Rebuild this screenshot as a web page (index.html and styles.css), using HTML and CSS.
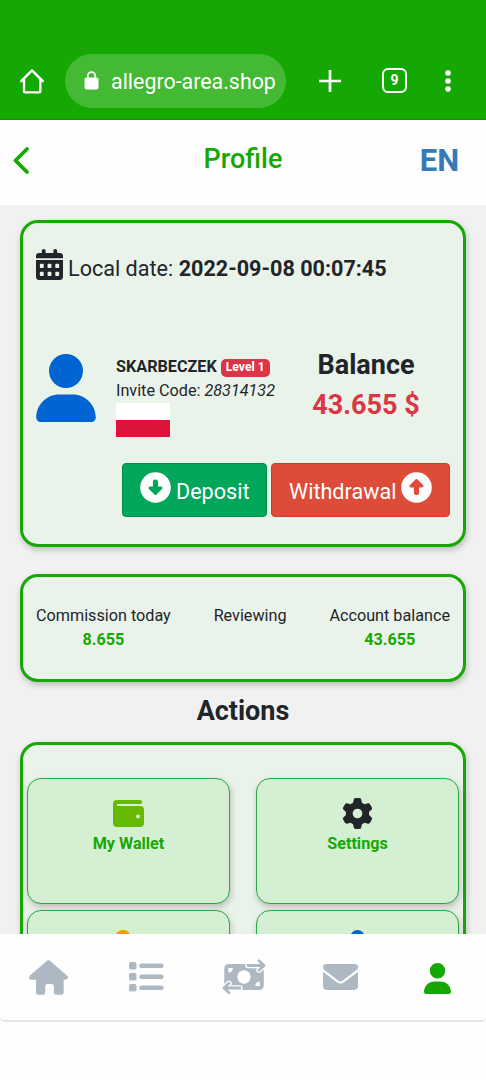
FILE: index.html
```html
<!DOCTYPE html>
<html lang="en">
<head>
<meta charset="utf-8">
<title>Profile</title>
<link rel="stylesheet" href="styles.css">
</head>
<body>
<div class="screen">
  <div class="browser">
    <svg class="home" width="26" height="26" viewBox="0 0 26 26" fill="none" stroke="#fff" stroke-width="2.4" stroke-linejoin="round" stroke-linecap="round"><path d="M2.2 13.2 13 2.4l10.800 10.800M5 11.500V23.500q0 .9.9.9H20.400q.9 0 .9-.9V11.500"/></svg>
    <div class="address">
      <svg width="15" height="19" viewBox="0 0 15 19"><rect x=".5" y="6.500" width="14" height="12" rx="2" fill="#fff"/><path d="M3.800 8V4.800a3.700 3.700 0 0 1 7.400 0V8" fill="none" stroke="#fff" stroke-width="1.700"/></svg>
      <span class="url">allegro-area.shop</span>
    </div>
    <svg class="plus" width="22" height="22" viewBox="0 0 22 22" stroke="#fff" stroke-width="2.700"><path d="M11 0v22M0 11h22"/></svg>
    <span class="tabs">9</span>
    <svg class="dots" width="6" height="22" viewBox="0 0 6 22" fill="#fff"><circle cx="3" cy="3" r="2.800"/><circle cx="3" cy="11" r="2.800"/><circle cx="3" cy="19" r="2.800"/></svg>
  </div>
  <header class="header">
    <svg class="back" width="18" height="28" viewBox="0 0 18 28" fill="none" stroke="#16a802" stroke-width="3.800" stroke-linecap="round" stroke-linejoin="round"><path d="M15 3 3.500 14.500 15 26"/></svg>
    <h1 class="title">Profile</h1>
    <span class="lang">EN</span>
  </header>
  <main class="content">
    <section class="card profile">
      <div class="date-row">
        <svg class="calendar" width="27" height="31" viewBox="0 0 448 512" preserveAspectRatio="none" fill="#212529"><path fill-rule="evenodd" d="M128 0c17.700 0 32 14.300 32 32v32h128V32c0-17.700 14.300-32 32-32s32 14.300 32 32v32h48c26.500 0 48 21.500 48 48v40H0v-40c0-26.500 21.500-48 48-48h48V32c0-17.700 14.300-32 32-32zM0 180h448v284c0 26.500-21.500 48-48 48H48c-26.500 0-48-21.500-48-48zM64 256v44q0 12 12 12h40q12 0 12-12v-44q0-12-12-12H76q-12 0-12 12zm128 0v44q0 12 12 12h40q12 0 12-12v-44q0-12-12-12h-40q-12 0-12 12zm128 0v44q0 12 12 12h40q12 0 12-12v-44q0-12-12-12h-40q-12 0-12 12zM64 388v44q0 12 12 12h40q12 0 12-12v-44q0-12-12-12H76q-12 0-12 12zm128 0v44q0 12 12 12h40q12 0 12-12v-44q0-12-12-12h-40q-12 0-12 12zm128 0v44q0 12 12 12h40q12 0 12-12v-44q0-12-12-12h-40q-12 0-12 12z"/></svg>
        <span class="date">Local date: <b>2022-09-08 00:07:45</b></span>
      </div>
      <div class="user-row">
        <svg class="avatar" width="60" height="68" viewBox="0 0 448 512" fill="#0065d3"><path d="M224 256a128 128 0 1 0 0-256 128 128 0 1 0 0 256zm50.700 48H173.300C77.600 304 0 381.600 0 477.300 0 496.500 15.500 512 34.700 512h378.600c19.200 0 34.700-15.500 34.700-34.700C448 381.600 370.400 304 274.700 304z"/></svg>
        <div class="user">
          <div class="name-row"><b class="name">SKARBECZEK</b><span class="badge">Level 1</span></div>
          <div class="invite">Invite Code: <i>28314132</i></div>
          <div class="flag"></div>
        </div>
        <div class="balance"><div class="balance-label">Balance</div><div class="balance-value">43.655 $</div></div>
      </div>
      <div class="buttons">
        <div class="btn deposit">
          <svg width="31" height="31" viewBox="0 0 31 31"><circle cx="15.500" cy="15.500" r="15.300" fill="#fff"/><path d="M10 16l5.500 5.500L21 16z" fill="#00a65a" stroke="#00a65a" stroke-width="3" stroke-linejoin="round"/><path d="M15.500 10v8.500" stroke="#00a65a" stroke-width="5.200" stroke-linecap="round"/></svg>
          <span>Deposit</span>
        </div>
        <div class="btn withdrawal">
          <span>Withdrawal</span>
          <svg width="31" height="31" viewBox="0 0 31 31"><circle cx="15.500" cy="15.500" r="15.300" fill="#fff"/><path d="M10 14l5.500-5.500L21 14z" fill="#dd4b39" stroke="#dd4b39" stroke-width="3" stroke-linejoin="round"/><path d="M15.500 12v8.500" stroke="#dd4b39" stroke-width="5.200" stroke-linecap="round"/></svg>
        </div>
      </div>
    </section>
    <section class="card stats">
      <div class="stat"><span>Commission today</span><b>8.655</b></div>
      <div class="stat reviewing"><span>Reviewing</span></div>
      <div class="stat"><span>Account balance</span><b>43.655</b></div>
    </section>
    <h2 class="actions-title">Actions</h2>
    <section class="card actions">
      <div class="tile">
        <svg width="31" height="28" viewBox="0 0 31 28"><path fill-rule="evenodd" fill="#65ba00" d="M4 0H27q2 0 2 2T27 4H5Q4 4 4 5T5 6H27q4 0 4 4V23q0 4-4 4H4q-4 0-4-4V4Q0 0 4 0zM25 14.500a2 2 0 1 0 0 4 2 2 0 1 0 0-4z"/></svg>
        <span>My Wallet</span>
      </div>
      <div class="tile">
        <svg class="gear" width="31" height="31" viewBox="0 0 512 512" fill="#212529"><path d="M495.900 166.600c3.200 8.700.5 18.400-6.400 24.600l-43.300 39.400c1.100 8.300 1.700 16.800 1.700 25.400s-.6 17.100-1.700 25.400l43.300 39.400c6.900 6.200 9.600 15.900 6.400 24.600-4.400 11.900-9.700 23.300-15.800 34.300l-4.700 8.100c-6.600 11-14 21.400-22.100 31.200-5.900 7.200-15.700 9.600-24.500 6.800l-55.700-17.700c-13.400 10.300-28.200 18.900-44 25.400l-12.500 57.100c-2 9.100-9 16.300-18.200 17.800-13.800 2.300-28 3.500-42.500 3.500s-28.700-1.200-42.500-3.500c-9.200-1.500-16.200-8.700-18.200-17.800l-12.500-57.100c-15.800-6.500-30.600-15.100-44-25.400l-55.700 17.700c-8.800 2.800-18.600.4-24.500-6.800-8.100-9.800-15.500-20.200-22.100-31.200l-4.700-8.100c-6.100-11-11.400-22.400-15.800-34.300-3.200-8.700-.5-18.400 6.400-24.600l43.300-39.400c-1.100-8.300-1.700-16.800-1.700-25.400s.6-17.100 1.700-25.400l-43.300-39.400c-6.900-6.200-9.600-15.900-6.400-24.600 4.400-11.900 9.700-23.300 15.800-34.300l4.700-8.100c6.600-11 14-21.400 22.100-31.200 5.900-7.200 15.700-9.600 24.500-6.800l55.700 17.700c13.400-10.300 28.200-18.900 44-25.400l12.500-57.100c2-9.100 9-16.300 18.200-17.800C227.300 1.200 241.500 0 256 0s28.700 1.200 42.500 3.500c9.200 1.500 16.200 8.700 18.200 17.800l12.500 57.100c15.800 6.500 30.600 15.100 44 25.400l55.700-17.700c8.800-2.800 18.600-.4 24.500 6.800 8.100 9.800 15.500 20.200 22.100 31.200l4.700 8.100c6.100 11 11.400 22.400 15.800 34.300zM256 336a80 80 0 1 0 0-160 80 80 0 1 0 0 160z"/></svg>
        <span>Settings</span>
      </div>
      <div class="tile next"><svg width="31" height="31" viewBox="0 0 31 31"><circle cx="10" cy="8" r="8" fill="#f99b00"/></svg></div>
      <div class="tile next"><svg width="31" height="31" viewBox="0 0 31 31"><circle cx="15.500" cy="7" r="7" fill="#0065d3"/></svg></div>
    </section>
  </main>
  <nav class="nav">
    <div class="nav-item"><svg width="39" height="35" viewBox="0 0 576 512"><path fill="#adb8c2" d="M575.800 255.500c0 18-15 32.100-32 32.100h-32l.7 160.200V472c0 22.100-17.900 40-40 40H408c-22 0-40-17.900-40-40v-88c0-17.700-14.300-32-32-32h-64c-17.700 0-32 14.300-32 32v88c0 22.100-18 40-40 40h-56c-22 0-40-17.900-40-40V287.600H32c-18 0-32-14-32-32.100 0-9 3-17 10-24L266.400 8c7-7 15-8 22-8s15 2 21 7l255.400 224.500c8 7 12 15 11 24z"/></svg></div>
    <div class="nav-item list"><svg width="35" height="30" viewBox="0 0 35 30" fill="#adb8c2"><rect width="7.500" height="7.500" rx="1.700"/><rect y="11" width="7.500" height="7.500" rx="1.700"/><rect y="22" width="7.500" height="7.500" rx="1.700"/><rect x="10.200" y="1.400" width="24.500" height="4.600" rx="2.300"/><rect x="10.200" y="12.400" width="24.500" height="4.600" rx="2.300"/><rect x="10.200" y="23.400" width="24.500" height="4.600" rx="2.300"/></svg></div>
    <div class="nav-item"><svg width="44" height="36" viewBox="0 0 44 36"><rect x="2.300" y="5" width="39.500" height="26" rx="4.500" fill="#adb8c2"/><circle cx="22" cy="18" r="6.700" fill="#fff"/><path fill="#fff" d="M6.300 9h4.500q0 4.500-4.500 4.500zM37.800 27h-4.500q0-4.500 4.500-4.500z"/><g fill="none" stroke-linecap="round" stroke-linejoin="round"><g stroke="#fff" stroke-width="5.500"><path d="M26 6.500H42M37 1.800l5 4.700-5 4.700M18 29H2M7 24.300 2 29l5 4.700"/></g><g stroke="#adb8c2" stroke-width="2.800"><path d="M26 6.500H42M37 1.800l5 4.700-5 4.700M18 29H2M7 24.300 2 29l5 4.700"/></g></g></svg></div>
    <div class="nav-item"><svg width="35" height="27" viewBox="0 0 35 27" fill="#adb8c2"><path d="M3.500 0h28Q35 0 35 3.300 35 5 33.600 6L19.500 16.700q-2 1.400-4 0L1.400 6Q0 5 0 3.300 0 0 3.500 0zM0 7.800l14.200 10.700q3.300 2.300 6.600 0L35 7.800V22q0 4-4.500 4h-26Q0 26 0 22z"/></svg></div>
    <div class="nav-item me"><svg width="27" height="31" viewBox="0 0 448 512" fill="#16a802"><path d="M224 256a128 128 0 1 0 0-256 128 128 0 1 0 0 256zm50.700 48H173.300C77.600 304 0 381.600 0 477.300 0 496.500 15.500 512 34.700 512h378.600c19.200 0 34.700-15.500 34.700-34.700C448 381.600 370.400 304 274.700 304z"/></svg></div>
  </nav>
</div>
</body>
</html>
```
FILE: styles.css
```css
* { box-sizing: border-box; }
body { margin: 0; font-family: Roboto, "Liberation Sans", sans-serif; color: #212529; background: #fefefe; }
svg { display: block; flex: none; overflow: visible; }
h1, h2 { margin: 0; }
.screen { width: 486px; height: 1080px; display: flex; flex-direction: column; overflow: hidden; white-space: nowrap; }
.browser { height: 120px; flex: none; padding: 42px 35px 0 19px; display: flex; align-items: center; background: #16a802; border-bottom: 1px solid #138f02; color: #fff; }
.address { width: 221px; height: 54px; margin-left: 20px; padding-left: 19px; display: flex; align-items: center; border-radius: 27px; background: #44b934; }
.url { margin-left: 12px; padding-top: 2px; font-size: 21.4px; line-height: 52px; }
.plus { margin-left: 33px; }
.tabs { width: 25px; height: 25px; margin-left: 41px; border: 2.500px solid #fff; border-radius: 6px; font-size: 14px; font-weight: 700; line-height: 21px; text-align: center; }
.dots { margin-left: 38px; }
.header { height: 85px; flex: none; display: grid; grid-template-columns: 100px 1fr 100px; align-items: center; padding: 0 12px 6px; background: #fefefe; }
.title { text-align: center; color: #16a802; font-size: 27px; font-weight: 500; line-height: 36px; padding-bottom: 1px; }
.back { margin-top: 1px; }
.lang { padding: 1px 15px 0 0; text-align: right; color: #337ab7; font-size: 31px; font-weight: 700; }
.content { flex: 1; min-height: 0; padding: 15px 20px 0; background: #f1f1f1; overflow: hidden; }
.card { border: 3px solid #16a802; border-radius: 18px; background: #eaf3ea; box-shadow: 1px 3px 6px rgba(0,0,0,.22); }
.profile { height: 327px; padding: 26px 13px 0; }
.date-row { display: flex; height: 38px; gap: 5px; }
.date { font-size: 21.6px; line-height: 39px; }
.user-row { display: flex; margin-top: 66px; height: 112px; }
.avatar { margin-top: 1px; }
.user { margin-left: 20px; width: 162px; }
.name-row { display: flex; align-items: center; gap: 4px; height: 26px; }
.name { font-size: 16.2px; }
.badge { height: 18px; margin-top: 3px; padding: 0 5px; border-radius: 5px; background: #dc3545; color: #fff; font-size: 12.15px; font-weight: 700; line-height: 17px; }
.invite { font-size: 16.2px; line-height: 24px; }
.flag { width: 54px; height: 34px; background: linear-gradient(#fff 50%, #dc143c 50%); }
.balance { margin: -8px 12px 0 16px; flex: 1; text-align: center; font-size: 27px; font-weight: 700; line-height: 40px; }
.balance-value { color: #dc3545; }
.buttons { display: flex; justify-content: flex-end; gap: 4px; margin-top: -2px; }
.btn { display: flex; height: 54px; gap: 5px; padding: 8px 16px 0 17px; border: 1px solid #008d4c; border-radius: 4px; background: #00a65a; color: #fff; font-size: 21.6px; line-height: 40px; }
.deposit { width: 145px; }
.withdrawal { width: 179px; background: #dd4b39; border-color: #d73925; }
.stats { display: flex; justify-content: space-between; height: 108px; margin-top: 27px; padding: 27px 13px 0; font-size: 16.2px; line-height: 24px; }
.stat { display: flex; flex-direction: column; align-items: center; }
.stat b { color: #16a802; }
.actions-title { margin: 10px 0 12px; text-align: center; font-size: 27px; line-height: 38px; }
.actions { display: grid; grid-template-columns: 203px 203px; gap: 6px 26px; padding: 33px 4px 0; }
.tile { height: 126px; padding-top: 21px; display: flex; flex-direction: column; align-items: center; border: 1px solid #28a745; border-radius: 14px; background: #d5efd3; box-shadow: 1px 3px 6px rgba(0,0,0,.22); color: #16a802; font-size: 16.2px; font-weight: 700; }
.tile span { line-height: 24px; margin-top: 4px; }
.tile .gear { margin-top: -2px; }
.tile .gear + span { margin-top: 3px; }
.tile.next { padding-top: 19px; }
.nav { height: 88px; flex: none; display: flex; align-items: center; background: #fefefe; border-bottom: 2px solid #e4e4e4; border-radius: 5px; margin-bottom: 58px; }
.nav-item { flex: 1; display: flex; justify-content: center; }
.list { padding-left: 1px; }
.me { padding-top: 3px; }
```
